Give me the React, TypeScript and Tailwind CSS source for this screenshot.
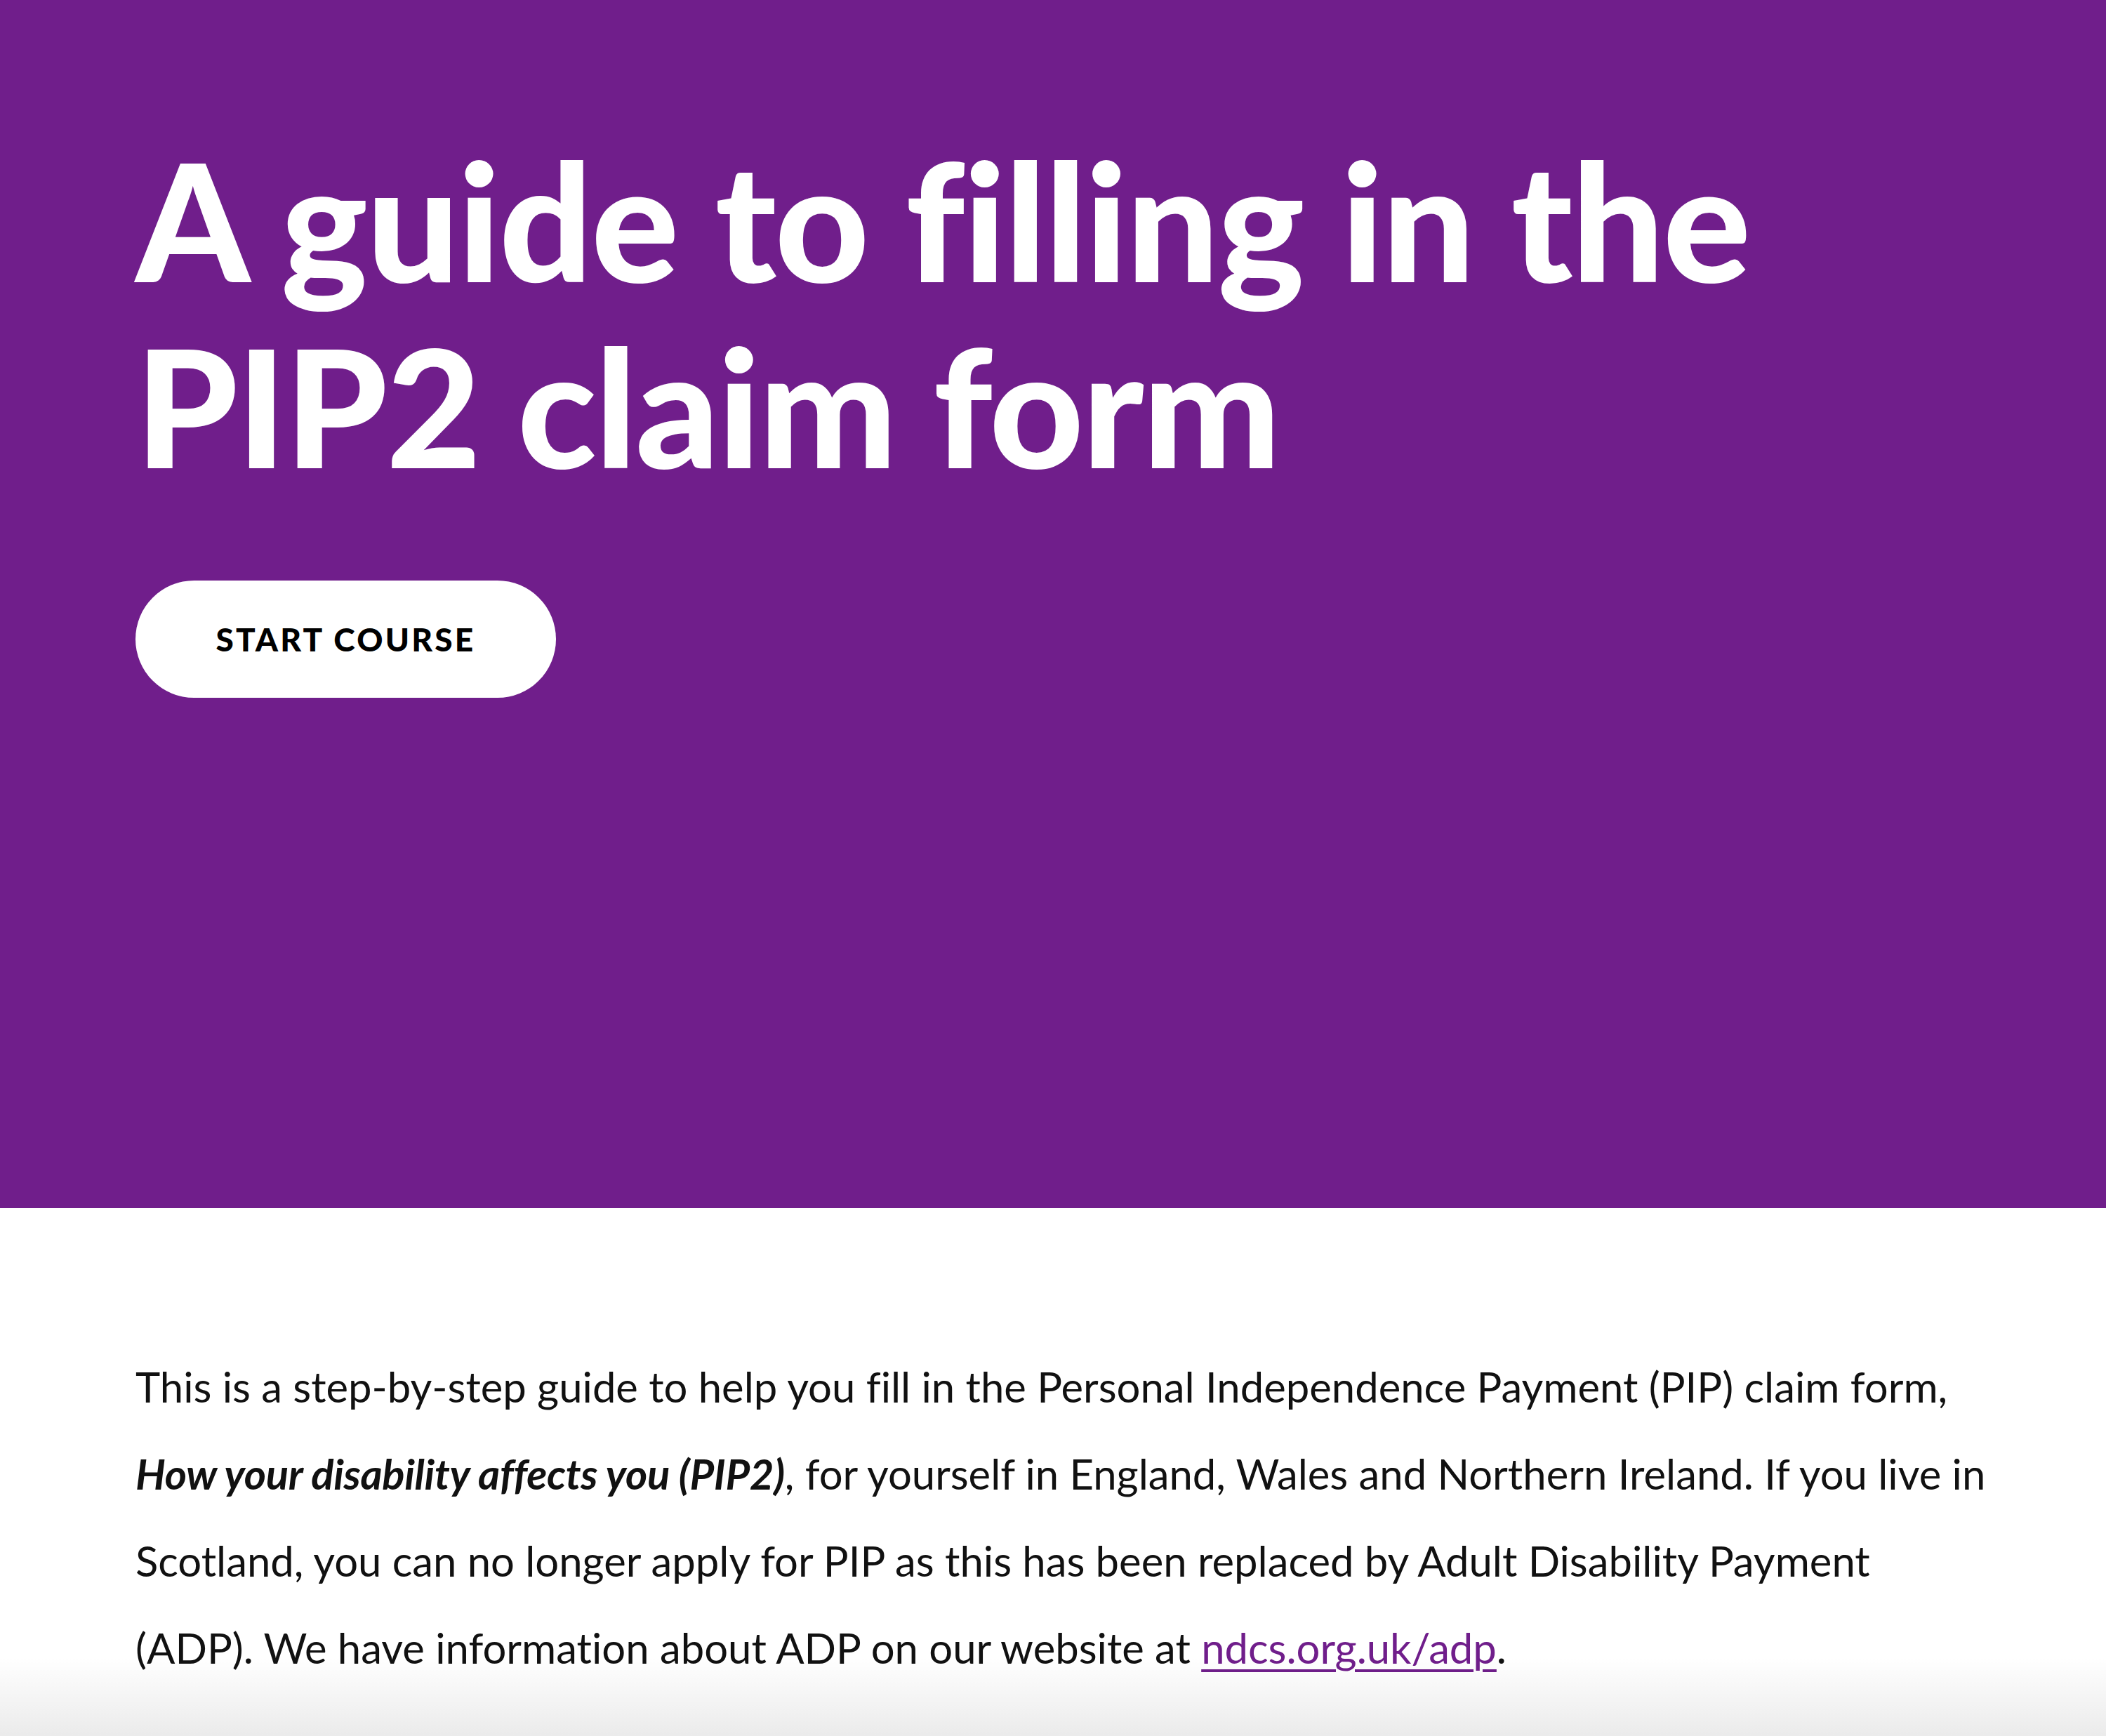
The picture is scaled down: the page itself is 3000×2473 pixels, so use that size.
export default function App() {
  return (
    <main className="relative min-h-[2473px] bg-white font-['Lato','Liberation_Sans',sans-serif] text-[#111111] [font-variant-ligatures:none]">
      <section className="h-[1721px] bg-[#701e8b] pt-[180px] pr-[164px] pl-[193px]">
        <h1 className="text-[233px] leading-[265px] font-black tracking-[-0.008em] text-white">
          A guide to filling in the PIP2 claim form
        </h1>
        <button
          type="button"
          className="mt-[117px] flex h-[167px] w-[599px] items-center justify-center rounded-full bg-white text-[46px] font-black tracking-[0.07em] text-black"
        >
          START COURSE
        </button>
      </section>

      <section className="pt-[192px] pr-[164px] pl-[193px]">
        <p className="text-[59.8px] leading-[124px]">
          This is a step-by-step guide to help you fill in the Personal
          Independence Payment (PIP) claim form,{' '}
          <strong className="font-bold italic tracking-[-0.005em]">
            How your disability affects you (PIP2)
          </strong>
          , for yourself in England, Wales and Northern Ireland. If you live in
          Scotland, you can no longer apply for PIP as this has been replaced by
          Adult Disability Payment (ADP). We have information about ADP on our
          website at{' '}
          <a
            href="#"
            className="text-[#701e8b] underline decoration-[4px] underline-offset-[8px]"
          >
            ndcs.org.uk/adp
          </a>
          .
        </p>
      </section>

      <div className="pointer-events-none absolute inset-x-0 bottom-0 h-[113px] bg-gradient-to-b from-transparent to-black/[0.08]" />
    </main>
  );
}
